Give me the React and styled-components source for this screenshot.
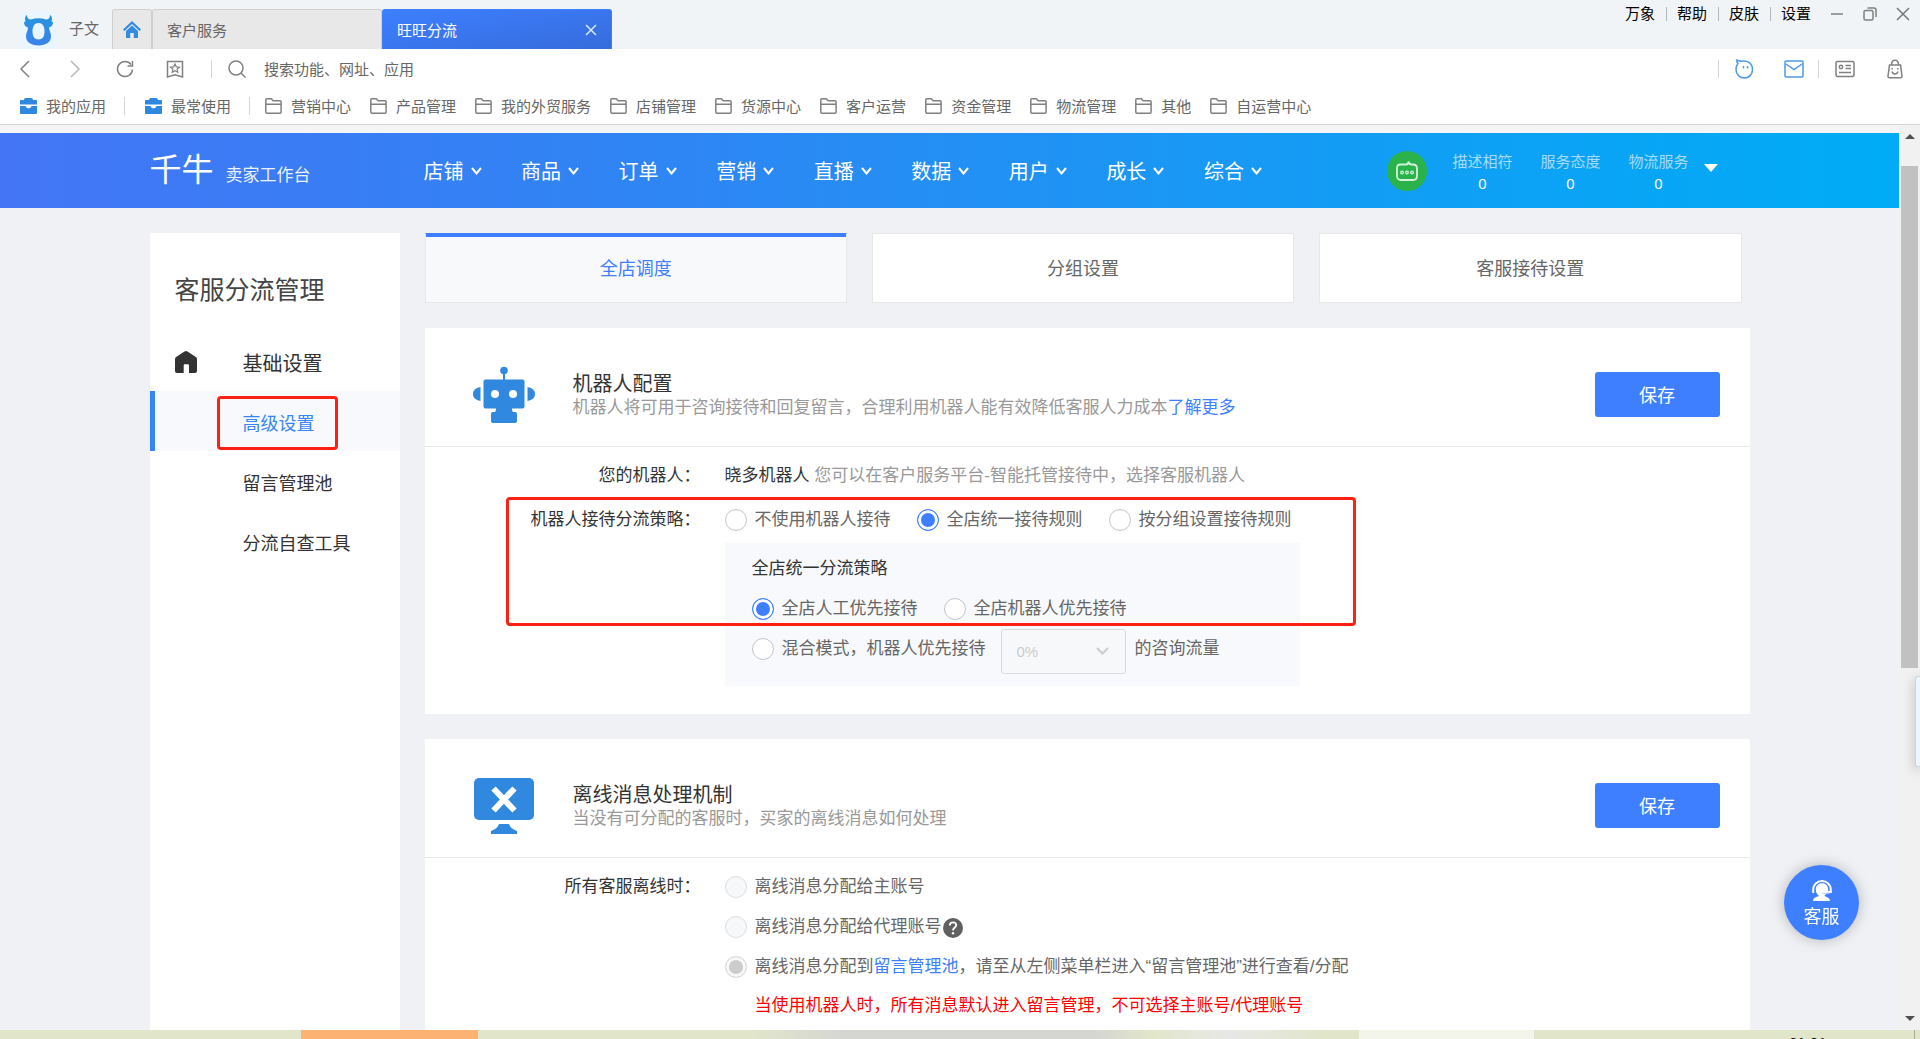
import React, { useState } from 'react';
import styled, { createGlobalStyle } from 'styled-components';

const GlobalStyle = createGlobalStyle`
  * { box-sizing: border-box; }
  body {
    margin: 0;
    font-family: "Liberation Sans", "Noto Sans CJK SC", sans-serif;
    font-size: 15px;
    color: #333;
    background: #eff1f5;
  }
  button, input, select { font: inherit; color: inherit; }
  a { text-decoration: none; color: inherit; }
  h1, h2, p { margin: 0; font-weight: 400; }
  svg { display: block; flex: none; }
`;

const Window = styled.div`
  height: 100vh;
  display: flex;
  flex-direction: column;
  overflow: hidden;
`;

/* ---------- window title bar ---------- */
const TitleBar = styled.header`
  display: flex;
  align-items: flex-end;
  height: 49px;
  padding: 0 10px 0 20px;
  background: #f0f4f7;
`;
const LogoTile = styled.span`
  width: 37px;
  height: 38px;
  background: #eaf5ff;
  border-radius: 4px;
`;
const UserName = styled.span`
  margin: 0 13px 0 12px;
  line-height: 40px;
  color: #666;
`;
const WindowTab = styled.button`
  display: flex;
  align-items: center;
  justify-content: space-between;
  width: ${(p) => (p.$icon ? 40 : 230)}px;
  height: 40px;
  padding: 0 ${(p) => (p.$icon ? 10 : 14)}px;
  border: 1px solid ${(p) => (p.$active ? '#3d7fff' : '#cfcfcf')};
  border-bottom: 0;
  border-radius: 3px 3px 0 0;
  background: ${(p) => (p.$active ? 'linear-gradient(170deg, #3d7fff, #366cdc)' : '#e8e8e8')};
  color: ${(p) => (p.$active ? '#fff' : '#666')};
`;
const WindowMenu = styled.nav`
  display: flex;
  align-items: center;
  align-self: flex-start;
  height: 28px;
  margin-left: auto;
  color: #000;
  a { padding: 0 11px 0 10px; line-height: 14px; }
  a + a { border-left: 1px solid #b4b8bb; }
`;
const WindowButtons = styled.div`
  display: flex;
  align-items: center;
  align-self: flex-start;
  gap: 19px;
  height: 28px;
  margin-left: 8px;
`;
const IconButton = styled.button`
  display: grid;
  place-items: center;
  width: ${(p) => p.$size || 20}px;
  padding: 0;
  border: 0;
  background: none;
`;

/* ---------- address and bookmark bars ---------- */
const AddressBar = styled.div`
  display: flex;
  align-items: center;
  height: 40px;
  padding: 0 15px;
  background: #fff;
`;
const IconGroup = styled.div`
  display: flex;
  gap: ${(p) => p.$gap}px;
`;
const Divider = styled.i`
  width: 1px;
  height: 18px;
  margin: 0 ${(p) => p.$after}px 0 ${(p) => p.$before}px;
  background: #d5d5d5;
`;
const SearchField = styled.label`
  display: flex;
  flex: 1;
  align-items: center;
  gap: 17px;
`;
const SearchInput = styled.input`
  flex: 1;
  padding: 0;
  border: 0;
  outline: 0;
  color: #666;
  &::placeholder { color: #666; opacity: 1; }
`;
const BookmarkBar = styled.nav`
  display: flex;
  align-items: center;
  height: 36px;
  padding: 0 0 2px 20px;
  background: #fff;
  border-bottom: 1px solid #d5d5d5;
`;
const Bookmark = styled.a`
  display: flex;
  align-items: center;
  gap: 9px;
  color: #666;
  white-space: nowrap;
`;
const Folders = styled.div`
  display: flex;
  gap: 19px;
`;

/* ---------- scrolling page ---------- */
const Viewport = styled.div`
  flex: 1;
  min-height: 0;
  display: flex;
  background: #f5f5f5;
`;
const Page = styled.div`
  flex: 1;
  display: flex;
  flex-direction: column;
  min-width: 0;
  padding-top: 8px;
  overflow: hidden;
`;
const Scrollbar = styled.div`
  display: flex;
  flex-direction: column;
  align-items: center;
  width: 21px;
  padding: 9px 0;
  background: #f1f1f1;
`;
const Arrow = styled.i`
  border: 5px solid transparent;
  ${(p) => (p.$down ? 'border-top-color: #505050; border-bottom: 0;' : 'border-bottom-color: #505050; border-top: 0;')}
`;
const Thumb = styled.div`
  width: 17px;
  flex: 0 1 502px;
  margin: 27px 0 auto;
  background: #c1c1c1;
`;

const Banner = styled.div`
  flex: none;
  background: linear-gradient(90deg, #4375f5 0%, #2e86f4 36%, #0fa0f5 76%, #00acf6 100%);
  color: #fff;
`;
const Container = styled.div`
  display: flex;
  width: 100%;
  max-width: 1600px;
  margin: 0 auto;
`;
const BannerInner = styled(Container)`
  align-items: center;
  height: 75px;
  padding-right: 32px;
`;
const Brand = styled.div`
  display: flex;
  align-items: baseline;
  gap: 12px;
  width: 274px;
  padding-top: 5px;
  line-height: 44px;
  b { font-size: 32px; font-weight: 400; }
  span { font-size: 17px; color: #eaf2ff; }
`;
const MainMenu = styled.nav`
  display: grid;
  grid-template-columns: repeat(9, 1fr);
  width: 878px;
`;
const MenuLink = styled.a`
  display: flex;
  align-items: center;
  gap: 7px;
  font-size: 20px;
`;
const Scores = styled.div`
  display: flex;
  align-items: center;
  margin-left: auto;
`;
const ScoreBadge = styled.span`
  display: grid;
  place-items: center;
  width: 40px;
  height: 40px;
  margin-right: 12px;
  border-radius: 50%;
  background: #2ab34b;
`;
const Score = styled.div`
  width: 88px;
  padding-top: 4px;
  text-align: center;
  line-height: 22px;
  color: #fff;
  span { display: block; color: #a5dbfb; }
`;
const Caret = styled.i`
  margin: 0 0 6px 1px;
  border: 7px solid transparent;
  border-top: 8px solid #fff;
  border-bottom: 0;
`;

const Body = styled.div`
  flex: 1;
  min-height: 0;
  padding-top: 25px;
  background: #eff1f5;
  overflow: hidden;
`;
const Columns = styled(Container)`
  gap: 25px;
  height: 100%;
`;
const Sidebar = styled.aside`
  flex: 0 0 250px;
  background: #fff;
  h1 { padding: 40px 25px 23px; font-size: 25px; line-height: 35px; color: #444; }
`;
const SideLink = styled.a`
  position: relative;
  display: grid;
  grid-template-columns: 68px 1fr;
  align-items: center;
  height: 60px;
  padding: 2px 0 0 20px;
  border-left: 5px solid ${(p) => (p.$active ? '#3586f3' : 'transparent')};
  background: ${(p) => (p.$active ? '#f7f9fc' : 'none')};
  color: ${(p) => (p.$active ? '#3586f3' : '#333')};
  font-size: ${(p) => (p.$large ? 20 : 18)}px;
`;
const Highlight = styled.i`
  position: absolute;
  top: ${(p) => p.$top}px;
  left: ${(p) => p.$left}px;
  width: ${(p) => p.$width}px;
  height: ${(p) => p.$height}px;
  border: 3px solid #ff2014;
  border-radius: 4px;
  pointer-events: none;
`;
const Content = styled.main`
  flex: 1;
  display: flex;
  flex-direction: column;
  gap: 25px;
  min-width: 0;
`;
const Tabs = styled.div`
  display: grid;
  grid-template-columns: repeat(3, 1fr);
  gap: 25px;
  padding-right: 8px;
`;
const Tab = styled.button`
  height: 70px;
  padding: 0 0 2px;
  border: 1px solid #e5e7ea;
  box-shadow: ${(p) => (p.$active ? 'inset 0 3px #3d7fff' : 'none')};
  border-top-color: ${(p) => (p.$active ? '#3d7fff' : '#e5e7ea')};
  background: ${(p) => (p.$active ? '#f7f9fb' : '#fff')};
  color: ${(p) => (p.$active ? '#3d7fff' : '#666')};
  font-size: 18px;
`;
const Card = styled.section`
  position: relative;
  flex: ${(p) => (p.$last ? '1 0 auto' : 'none')};
  background: #fff;
`;
const CardHead = styled.div`
  display: flex;
  align-items: center;
  height: 119px;
  padding: 15px 30px 0 48px;
  border-bottom: 1px solid #e5e7ea;
`;
const CardIntro = styled.div`
  flex: 1;
  margin-left: 38px;
  padding-top: 3px;
  line-height: 24px;
  h2 { font-size: 20px; line-height: 24px; }
  p { font-size: 17px; color: #999; }
`;
const SaveButton = styled.button`
  align-self: flex-end;
  width: 125px;
  height: 45px;
  margin-bottom: 29px;
  padding: 0 0 2px;
  border: 0;
  border-radius: 3px;
  background: #3d7fff;
  color: #fff;
  font-size: 18px;
`;
const Form = styled.div`
  display: grid;
  grid-template-columns: 276px 1fr;
  column-gap: 24px;
  row-gap: ${(p) => p.$gap || 0}px;
  padding: ${(p) => p.$pad};
  font-size: 17px;
  line-height: 28px;
  color: #666;
`;
const FieldName = styled.span`
  height: ${(p) => p.$height}px;
  line-height: ${(p) => p.$height}px;
  text-align: right;
  color: #333;
`;
const Hint = styled.span`
  color: #999;
  b { font-weight: 400; color: #333; }
`;
const RadioRow = styled.div`
  display: flex;
  gap: ${(p) => (p.$tight ? 0 : 26)}px;
  align-items: center;
  height: ${(p) => p.$height || 28}px;
`;
const RadioLabel = styled.label`
  display: flex;
  align-items: center;
  gap: 8px;
  white-space: nowrap;
`;
const Radio = styled.input.attrs({ type: 'radio' })`
  appearance: none;
  width: 22px;
  height: 22px;
  margin: 0;
  border: 1px solid #c4c6cc;
  border-radius: 50%;
  background: #fff;
  &:checked { border-color: #3d7fff; background: #3d7fff; box-shadow: inset 0 0 0 3px #fff; }
  &:disabled { border-color: #dcdee3; background: #f7f8fa; }
  &:disabled:checked { background: #ccc; box-shadow: inset 0 0 0 3px #f7f8fa; }
`;
const Panel = styled.div`
  width: 575px;
  margin-top: 9px;
  padding: 12px 27px 12px;
  background: #f7f9fc;
`;
const PanelTitle = styled.p`
  margin-bottom: 12px;
  color: #333;
`;
const MixedRow = styled.div`
  display: flex;
  margin-top: 6px;
  line-height: 40px;
  ${RadioLabel} { height: 40px; }
`;
const SelectBox = styled.span`
  position: relative;
  margin: 0 9px 0 15px;
  svg { position: absolute; right: 17px; top: 18px; pointer-events: none; }
`;
const Select = styled.select`
  appearance: none;
  display: block;
  width: 125px;
  height: 45px;
  padding: 0 15px;
  border: 1px solid #d8dade;
  border-radius: 3px;
  background: #f7f8fa;
  font-size: 15px;
  color: #ccc;
  opacity: 1;
`;
const TextLink = styled.a`
  color: #3d7fff;
`;
const Warning = styled.p`
  padding-left: 30px;
  line-height: 38px;
  color: #f00;
`;
const HelpButton = styled(IconButton)`
  margin: 2px 0 0 1px;
`;

const ServiceButton = styled.button`
  position: fixed;
  right: 61px;
  bottom: 99px;
  display: flex;
  flex-direction: column;
  align-items: center;
  gap: 4px;
  width: 75px;
  height: 75px;
  padding: 15px 0 0;
  border: 0;
  border-radius: 50%;
  background: #3d7fff;
  box-shadow: 0 0 14px rgba(0, 0, 0, 0.25);
  color: #fff;
  font-size: 18px;
  line-height: 24px;
`;
const SideDock = styled.div`
  position: fixed;
  right: 0;
  top: 676px;
  width: 5px;
  height: 91px;
  border: 1px solid #cfd3d6;
  border-right: 0;
  border-radius: 3px 0 0 3px;
  background: #ebf6ff;
  box-shadow: 0 3px 12px rgba(0, 0, 0, 0.3);
`;
const Taskbar = styled.footer`
  display: grid;
  grid-template-columns: 301px 177px 1fr 175px 255px 125px 6px;
  flex: none;
  height: 9px;
  overflow: hidden;
  background: linear-gradient(90deg, #e1e6cb 0 39%, #d5d6d2 44% 57%, #e1e6cb 60%, #e7e8e6 64%, #e1e5ca 69% 100%);
  color: #000;
`;
const TaskSlot = styled.span`
  background: ${(p) => p.$color};
`;
const Clock = styled.time`
  padding-top: 3px;
  font-size: 15px;
  line-height: 20px;
`;
const DesktopEdge = styled.span`
  border-left: 1px solid #a9ad98;
`;

/* ---------- drawings ---------- */
const Line = ({ w = 20, h = 20, color = '#808080', sw = 1.5, children }) => (
  <svg width={w} height={h} viewBox={`0 0 ${w} ${h}`} fill="none" stroke={color} strokeWidth={sw} aria-hidden="true">
    {children}
  </svg>
);

const BullLogo = () => (
  <svg width="37" height="37" viewBox="0 0 37 37" aria-hidden="true">
    <defs>
      <linearGradient id="bull" x1="0" y1="0" x2="0" y2="1">
        <stop offset="0" stopColor="#2594dc" />
        <stop offset="1" stopColor="#3c82ea" />
      </linearGradient>
    </defs>
    <path
      fill="url(#bull)"
      fillRule="evenodd"
      d="M7 4c0 3 1.500 4.500 4 4.500 5-1.800 10-1.800 15 0 2.500 0 4-1.500 4-4.500 2 1 2.500 4 1.500 6.500l1.500.5c0 3-1.500 5-4 5.500 0 3 2 5 2 9 0 5.500-5 9-12.500 9S6 31 6 25.500c0-4 2-6 2-9C5.500 16 4 14 4 11l1.500-.5C4.500 8 5 5 7 4ZM18.500 12c-4 0-6 3-6 8.500 0 5 2 8 6 8s6-3 6-8c0-5.500-2-8.500-6-8.500Z"
    />
  </svg>
);
const TabHome = () => (
  <svg width="18" height="17" viewBox="0 0 18 17" fill="#338be0" aria-hidden="true">
    <path d="M9 0 18 8.500 16.500 10 9 3 1.500 10 0 8.500Z" />
    <path d="M9 4.500 15 10v7h-4.200v-5H7.200v5H3v-7Z" />
  </svg>
);
const CloseIcon = ({ color = '#777', size = 12 }) => (
  <Line w={size} h={size} color={color}><path d={`M1 1 ${size - 1} ${size - 1}M${size - 1} 1 1 ${size - 1}`} /></Line>
);
const BriefcaseIcon = () => (
  <svg width="17" height="16" viewBox="0 0 17 16" fill="#2f88df" aria-hidden="true">
    <path d="M4 2C4 .8 4.800 0 6 0h5c1.200 0 2 .8 2 2h3a1 1 0 0 1 1 1v3.500H0V3a1 1 0 0 1 1-1Z" />
    <path d="M0 8h5.500c.4 1.500 1.500 2.300 3 2.300s2.600-.8 3-2.300H17v7a1 1 0 0 1-1 1H1a1 1 0 0 1-1-1Z" />
  </svg>
);
const FolderIcon = () => (
  <Line w={17} h={16}><path d="M.8 14V1.800C.8 1.200 1.200.8 1.800.8h4.500l1.800 2h7c.6 0 1 .4 1 1V14c0 .7-.4 1.200-1.200 1.200H2C1.200 15.200.8 14.700.8 14ZM1 6.200h15" /></Line>
);
const Chevron = ({ color = '#fff', w = 11, sw = 2 }) => (
  <Line w={w} h={8} color={color} sw={sw}><path d={`M1 1 ${w / 2} 6.500 ${w - 1} 1`} /></Line>
);
const RobotFace = () => (
  <Line w={24} h={22} color="#d4f0da" sw={1.8}>
    <path d="M5 4.500h6c2 0 2.500-1 2.500-3 .3 2 1 3 3 3H18c2.500 0 4 1.500 4 4V16c0 2.500-1.500 4-4 4H6c-2.500 0-4-1.500-4-4V8.500c0-2.500 1-4 3-4Z" />
    <g strokeWidth="1.300"><circle cx="7" cy="12.500" r="1.300" /><circle cx="12" cy="12.500" r="1.300" /><circle cx="17" cy="12.500" r="1.300" /></g>
  </Line>
);
const SideHome = () => (
  <svg width="22" height="22" viewBox="0 0 22 22" fill="#333" aria-hidden="true">
    <path d="M11 0c.5 0 1 .2 1.500.5l8 5.200c.9.600 1.500 1.400 1.500 2.500V20c0 1.200-.8 2-2 2h-6v-7.500c0-.8-.5-1.200-1.300-1.200H10c-.8 0-1.300.4-1.300 1.200V22H2c-1.200 0-2-.8-2-2V8.200c0-1.100.6-1.900 1.500-2.500l8-5.200C10 .2 10.500 0 11 0Z" />
  </svg>
);
const RobotIcon = () => (
  <svg width="62" height="58" viewBox="0 0 62 58" fill="#3089de" aria-hidden="true">
    <circle cx="31" cy="4.500" r="3.800" />
    <path d="M30 7h2v8h-2z" />
    <path fillRule="evenodd" d="M12.500 13.500h37a2 2 0 0 1 2 2v25a2 2 0 0 1-2 2H39c0 3 .5 3.500 3 3.500a2 2 0 0 1 2 2v7a2 2 0 0 1-2 2H20a2 2 0 0 1-2-2v-7a2 2 0 0 1 2-2c2.500 0 3-.5 3-3.500H12.500a2 2 0 0 1-2-2v-25a2 2 0 0 1 2-2ZM22 24a4 4 0 1 0 0 8 4 4 0 0 0 0-8Zm18 0a4 4 0 1 0 0 8 4 4 0 0 0 0-8Z" />
    <path d="M7.500 21C2.500 22 0 24.500 0 28s2.500 6 7.500 7ZM54.500 21c5 1 7.500 3.500 7.500 7s-2.500 6-7.500 7Z" />
  </svg>
);
const MonitorIcon = () => (
  <svg width="62" height="56" viewBox="0 0 62 56" aria-hidden="true">
    <rect x="1" width="60" height="42" rx="5" fill="#3089de" />
    <path d="M26 46h10c1 3 3 5 8 7v3H18v-3c5-2 7-4 8-7Z" fill="#3089de" />
    <path d="M20.500 10.500 41.500 32.500M41.500 10.500 20.500 32.500" stroke="#fff" strokeWidth="6" />
  </svg>
);
const HelpIcon = () => (
  <svg width="20" height="20" viewBox="0 0 20 20" aria-hidden="true">
    <circle cx="10" cy="10" r="10" fill="#606060" />
    <path d="M6.800 7.500c0-2 1.300-3.200 3.200-3.200s3.200 1.200 3.200 2.900c0 2.400-3.200 2.400-3.200 5.300" fill="none" stroke="#fff" strokeWidth="1.800" />
    <circle cx="10" cy="15.300" r="1.200" fill="#fff" />
  </svg>
);
const HeadsetIcon = () => (
  <svg width="20" height="21" viewBox="0 0 20 21" aria-hidden="true">
    <path d="M1.200 13V9.500a8.800 8.500 0 0 1 17.600 0V13" fill="none" stroke="#fff" strokeWidth="2" />
    <path d="M10 3.200c3.600 0 6.200 2.700 6.200 6.300 0 .6 0 1-.1 1.500l2.900-.4v1.900c-1.500 1-3.200 1.300-4.800 1.300-.4.800-.9 1.300-1.700 1.900 0 1 5.500 1 5.500 5.300H1c0-4.300 5.500-4.300 6-5.300-2-1-3.200-3.200-3.200-6.200 0-3.600 2.600-6.300 6.200-6.300Z" fill="#fff" />
    <path d="M10 13.200c2 .8 4.500.6 6.500-.8" fill="none" stroke="#a9c8ff" strokeWidth="1" />
  </svg>
);

const folders = ['营销中心', '产品管理', '我的外贸服务', '店铺管理', '货源中心', '客户运营', '资金管理', '物流管理', '其他', '自运营中心'];
const menu = ['店铺', '商品', '订单', '营销', '直播', '数据', '用户', '成长', '综合'];
const scores = ['描述相符', '服务态度', '物流服务'];
const tabs = ['全店调度', '分组设置', '客服接待设置'];
const rules = ['不使用机器人接待', '全店统一接待规则', '按分组设置接待规则'];

function Choice({ name, value, current, onPick, disabled, children }) {
  return (
    <RadioLabel>
      <Radio name={name} checked={current === value} disabled={disabled} onChange={() => onPick && onPick(value)} />
      <span>{children || value}</span>
    </RadioLabel>
  );
}

export default function App() {
  const [tab, setTab] = useState(tabs[0]);
  const [rule, setRule] = useState(rules[1]);
  const [strategy, setStrategy] = useState('全店人工优先接待');

  return (
    <Window>
      <GlobalStyle />
      <TitleBar>
        <LogoTile><BullLogo /></LogoTile>
        <UserName>子文</UserName>
        <WindowTab $icon aria-label="主页"><TabHome /></WindowTab>
        <WindowTab>客户服务</WindowTab>
        <WindowTab $active>旺旺分流<CloseIcon color="#dbe7ff" /></WindowTab>
        <WindowMenu>
          <a href="#skins">万象</a><a href="#help">帮助</a><a href="#theme">皮肤</a><a href="#settings">设置</a>
        </WindowMenu>
        <WindowButtons>
          <IconButton $size={14} aria-label="最小化"><Line w={14} h={14}><path d="M1 7h12" /></Line></IconButton>
          <IconButton $size={14} aria-label="还原">
            <Line w={14} h={14}><rect x="1" y="3.500" width="9" height="9.500" rx="1.500" /><path d="M4.500 1H11c1.200 0 2 .8 2 2v7" /></Line>
          </IconButton>
          <IconButton $size={14} aria-label="关闭"><CloseIcon size={14} /></IconButton>
        </WindowButtons>
      </TitleBar>

      <AddressBar>
        <IconGroup $gap={30}>
          <IconButton aria-label="后退"><Line><path d="M14 2 6 10l8 8" /></Line></IconButton>
          <IconButton aria-label="前进"><Line color="#b5b5b5"><path d="m6 2 8 8-8 8" /></Line></IconButton>
          <IconButton aria-label="刷新"><Line><path d="M17.500 10.500A7.500 7.500 0 1 1 16 5.500M17.500 2v5h-5" /></Line></IconButton>
          <IconButton aria-label="收藏">
            <Line><path d="M2.500 2.500h15v15.500L10 15.800 2.500 18Z" /><path strokeWidth="1.200" d="m10 5 1.300 2.900 3.200.3-2.400 2.100.7 3.100L10 11.800l-2.800 1.600.7-3.100-2.400-2.100 3.200-.3Z" /></Line>
          </IconButton>
        </IconGroup>
        <Divider $before={26} $after={15} />
        <SearchField>
          <Line><circle cx="9" cy="9" r="7" /><path d="m14 14 4.500 4.500" /></Line>
          <SearchInput placeholder="搜索功能、网址、应用" aria-label="搜索功能、网址、应用" />
        </SearchField>
        <Divider $before={0} $after={15} />
        <IconGroup $gap={30}>
          <IconButton aria-label="旺旺">
            <Line color="#4b9ae6"><path d="M3 3.500c.5-1 0-2-1-2.500 2 .5 4 1 5 1.300C13 .8 18.500 4 18.500 10.500c0 5-3.500 8.500-8 8.500S2 15.500 2 10.500C2 8 2.500 6 4 4.500Z" /><path d="M9.500 7v2.500M13.500 7v2.500" /></Line>
          </IconButton>
          <IconButton aria-label="消息"><Line color="#4b9ae6"><rect x="1" y="2" width="18" height="16" rx="1" /><path d="m2 5 8 5.500L18 5" /></Line></IconButton>
        </IconGroup>
        <Divider $before={14} $after={16} />
        <IconGroup $gap={30}>
          <IconButton aria-label="名片"><Line><rect x="1" y="2.500" width="18" height="15" rx="1.500" /><circle cx="6" cy="8" r="1.700" /><path d="M10.500 6.500h5.500M10.500 9.500h5.500M4 13.500h12" /></Line></IconButton>
          <IconButton aria-label="购物袋"><Line><path d="M4.500 6h11l1.500 11c.1 1-.5 1.800-1.500 1.800h-11C3.500 18.800 2.900 18 3 17ZM6.500 6c0-3 1.200-4.800 3.500-4.800S13.500 3 13.500 6M7 12.500c.5 1.800 1.500 2.500 3 2.500s2.500-.7 3-2.500M7.200 9v1.500M12.800 9v1.500" /></Line></IconButton>
        </IconGroup>
      </AddressBar>

      <BookmarkBar>
        <Bookmark href="#apps"><BriefcaseIcon />我的应用</Bookmark>
        <Divider $before={18} $after={20} />
        <Bookmark href="#frequent"><BriefcaseIcon />最常使用</Bookmark>
        <Divider $before={18} $after={15} />
        <Folders>
          {folders.map((f) => <Bookmark key={f} href="#folder"><FolderIcon />{f}</Bookmark>)}
        </Folders>
      </BookmarkBar>

      <Viewport>
        <Page>
          <Banner>
            <BannerInner>
              <Brand><b>千牛</b><span>卖家工作台</span></Brand>
              <MainMenu>
                {menu.map((m) => <MenuLink key={m} href="#menu">{m}<Chevron /></MenuLink>)}
              </MainMenu>
              <Scores>
                <ScoreBadge><RobotFace /></ScoreBadge>
                {scores.map((s) => <Score key={s}><span>{s}</span>0</Score>)}
                <Caret />
              </Scores>
            </BannerInner>
          </Banner>

          <Body>
            <Columns>
              <Sidebar>
                <h1>客服分流管理</h1>
                <SideLink href="#basic" $large><SideHome />基础设置</SideLink>
                <SideLink href="#advanced" $active>
                  <span />高级设置
                  <Highlight $top={5} $left={62} $width={121} $height={54} />
                </SideLink>
                <SideLink href="#pool"><span />留言管理池</SideLink>
                <SideLink href="#check"><span />分流自查工具</SideLink>
              </Sidebar>

              <Content>
                <Tabs>
                  {tabs.map((t) => <Tab key={t} $active={t === tab} onClick={() => setTab(t)}>{t}</Tab>)}
                </Tabs>

                <Card>
                  <CardHead>
                    <RobotIcon />
                    <CardIntro>
                      <h2>机器人配置</h2>
                      <p>机器人将可用于咨询接待和回复留言，合理利用机器人能有效降低客服人力成本<TextLink href="#more">了解更多</TextLink></p>
                    </CardIntro>
                    <SaveButton>保存</SaveButton>
                  </CardHead>
                  <Form $pad="15px 0 28px" $gap={16}>
                    <FieldName $height={28}>您的机器人：</FieldName>
                    <Hint><b>晓多机器人</b> 您可以在客户服务平台-智能托管接待中，选择客服机器人</Hint>
                    <FieldName $height={28}>机器人接待分流策略：</FieldName>
                    <div>
                      <RadioRow>
                        {rules.map((r) => <Choice key={r} name="rule" value={r} current={rule} onPick={setRule} />)}
                      </RadioRow>
                      <Panel>
                        <PanelTitle>全店统一分流策略</PanelTitle>
                        <RadioRow>
                          <Choice name="strategy" value="全店人工优先接待" current={strategy} onPick={setStrategy} />
                          <Choice name="strategy" value="全店机器人优先接待" current={strategy} onPick={setStrategy} />
                        </RadioRow>
                        <MixedRow>
                          <Choice name="strategy" value="混合模式，机器人优先接待" current={strategy} onPick={setStrategy} />
                          <SelectBox>
                            <Select disabled aria-label="机器人接待比例"><option>0%</option></Select>
                            <Chevron color="#ccc" w={13} />
                          </SelectBox>
                          的咨询流量
                        </MixedRow>
                      </Panel>
                    </div>
                  </Form>
                  <Highlight $top={169} $left={81} $width={850} $height={129} />
                </Card>

                <Card $last>
                  <CardHead>
                    <MonitorIcon />
                    <CardIntro>
                      <h2>离线消息处理机制</h2>
                      <p>当没有可分配的客服时，买家的离线消息如何处理</p>
                    </CardIntro>
                    <SaveButton>保存</SaveButton>
                  </CardHead>
                  <Form $pad="9px 0 0">
                    <FieldName $height={40}>所有客服离线时：</FieldName>
                    <div>
                      <RadioRow $height={40}><Choice name="offline" value="main" current="pool" disabled>离线消息分配给主账号</Choice></RadioRow>
                      <RadioRow $height={40} $tight>
                        <Choice name="offline" value="agent" current="pool" disabled>离线消息分配给代理账号</Choice>
                        <HelpButton aria-label="说明"><HelpIcon /></HelpButton>
                      </RadioRow>
                      <RadioRow $height={40}>
                        <Choice name="offline" value="pool" current="pool" disabled>
                          离线消息分配到<TextLink href="#pool">留言管理池</TextLink>，请至从左侧菜单栏进入“留言管理池”进行查看/分配
                        </Choice>
                      </RadioRow>
                      <Warning>当使用机器人时，所有消息默认进入留言管理，不可选择主账号/代理账号</Warning>
                    </div>
                  </Form>
                </Card>
              </Content>
            </Columns>
          </Body>
        </Page>
        <Scrollbar><Arrow /><Thumb /><Arrow $down /></Scrollbar>
      </Viewport>

      <Taskbar>
        <span />
        <TaskSlot $color="#fbb273" />
        <span />
        <TaskSlot $color="#f3f5ea" />
        <span />
        <Clock>21:21</Clock>
        <DesktopEdge />
      </Taskbar>
      <ServiceButton><HeadsetIcon />客服</ServiceButton>
      <SideDock />
    </Window>
  );
}
